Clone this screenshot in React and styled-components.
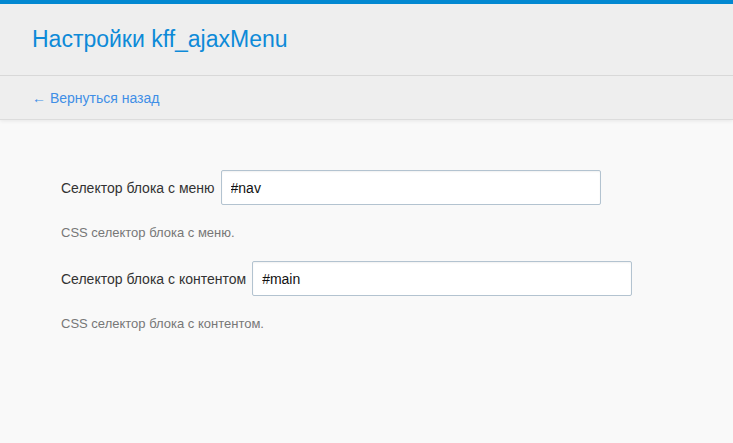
import React from 'react'
import styled, { createGlobalStyle } from 'styled-components'

const GlobalStyle = createGlobalStyle`
html, body {
  margin: 0;
  padding: 0;
  background: #f9f9f9;
  font-family: "Liberation Sans", Arial, sans-serif;
}
`

const Page = styled.div`
min-height: 443px;
background: #f9f9f9;
`

const Header = styled.header`
background: #eeeeee;
border-top: 4px solid #0288d1;
box-shadow: 0 1px 4px rgba(0, 0, 0, 0.08);
border-bottom: 1px solid #dcdcdc;
`

const TitleBar = styled.div`
height: 71px;
padding: 0 32px;
display: flex;
align-items: center;
border-bottom: 1px solid #d8d8d8;
`

const Title = styled.h1`
margin: 0;
font-size: 23px;
font-weight: normal;
color: #0d8ad8;
`

const NavBar = styled.div`
height: 43px;
padding: 0 32px;
display: flex;
align-items: center;
`

const BackLink = styled.a`
font-size: 14px;
color: #3f8ee6;
text-decoration: none;
`

const Form = styled.form`
padding: 50px 61px 0;
`

const Field = styled.div`
margin-bottom: 21px;
`

const Row = styled.div`
display: flex;
align-items: center;
gap: 6px;
`

const Label = styled.label`
font-size: 14px;
color: #333;
`

const Input = styled.input`
width: 380px;
height: 35px;
box-sizing: border-box;
padding: 0 9px;
border: 1px solid #b3c3d0;
border-radius: 2px;
background: #fff;
box-shadow: inset 0 1px 2px rgba(0, 0, 0, 0.06);
font-family: inherit;
font-size: 14px;
color: #111;
outline: none;
`

const Help = styled.p`
margin: 20px 0 0;
font-size: 13px;
color: #777;
`

const fields = [
  { id: 'nav', label: 'Селектор блока с меню', value: '#nav', help: 'CSS селектор блока с меню.' },
  { id: 'main', label: 'Селектор блока с контентом', value: '#main', help: 'CSS селектор блока с контентом.' },
]

export default function App() {
  return (
    <Page>
      <GlobalStyle />
      <Header>
        <TitleBar>
          <Title>Настройки kff_ajaxMenu</Title>
        </TitleBar>
        <NavBar>
          <BackLink href="#">← Вернуться назад</BackLink>
        </NavBar>
      </Header>
      <Form>
        {fields.map(f => (
          <Field key={f.id}>
            <Row>
              <Label htmlFor={f.id}>{f.label}</Label>
              <Input id={f.id} defaultValue={f.value} />
            </Row>
            <Help>{f.help}</Help>
          </Field>
        ))}
      </Form>
    </Page>
  )
}
